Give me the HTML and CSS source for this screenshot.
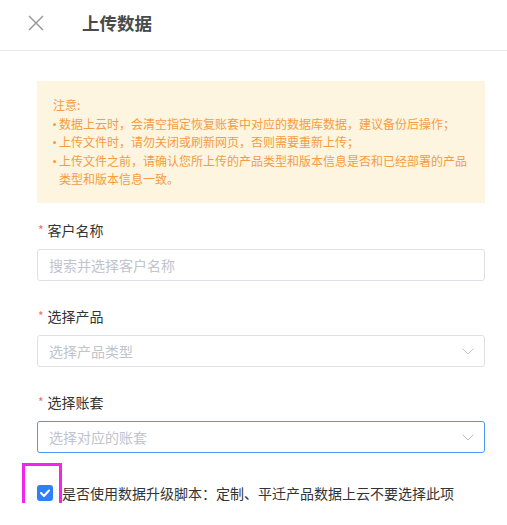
FILE: index.html
```html
<!DOCTYPE html>
<html lang="zh-CN">
<head>
<meta charset="utf-8">
<title>上传数据</title>
<link rel="stylesheet" href="styles.css">
</head>
<body>
<div class="drawer">
  <header class="header">
    <svg class="close" width="16" height="16" viewBox="0 0 16 16"><path d="M1 1L15 15M15 1L1 15" stroke="#9a9a9a" stroke-width="1.5" fill="none"/></svg>
    <h1 class="title">上传数据</h1>
  </header>
  <div class="body">
    <div class="notice">
      <div class="notice-line">注意:</div>
      <div class="notice-line bullet"><span class="dot"></span>数据上云时，会清空指定恢复账套中对应的数据库数据，建议备份后操作；</div>
      <div class="notice-line bullet"><span class="dot"></span>上传文件时，请勿关闭或刷新网页，否则需要重新上传；</div>
      <div class="notice-line bullet"><span class="dot"></span>上传文件之前，请确认您所上传的产品类型和版本信息是否和已经部署的产品类型和版本信息一致。</div>
    </div>

    <div class="form-item">
      <div class="label"><span class="req">*</span>客户名称</div>
      <div class="input"><span class="placeholder">搜索并选择客户名称</span></div>
    </div>
    <div class="form-item">
      <div class="label"><span class="req">*</span>选择产品</div>
      <div class="input"><span class="placeholder">选择产品类型</span>
        <svg class="chev" width="12" height="7" viewBox="0 0 12 7"><path d="M0.5 0.5L6 6L11.5 0.5" stroke="#c0c4cc" stroke-width="1" fill="none"/></svg>
      </div>
    </div>
    <div class="form-item">
      <div class="label"><span class="req">*</span>选择账套</div>
      <div class="input active"><span class="placeholder">选择对应的账套</span>
        <svg class="chev" width="12" height="7" viewBox="0 0 12 7"><path d="M0.5 0.5L6 6L11.5 0.5" stroke="#c0c4cc" stroke-width="1" fill="none"/></svg>
      </div>
    </div>

    <div class="check-row">
      <span class="check-wrap">
        <span class="checkbox"><svg width="10" height="8" viewBox="0 0 10 8"><path d="M1 4L4 7L9 1.5" stroke="#fff" stroke-width="2" fill="none" stroke-linecap="round" stroke-linejoin="round"/></svg></span>
        <span class="highlight"></span>
      </span>
      <span class="check-text">是否使用数据升级脚本：定制、平迁产品数据上云不要选择此项</span>
    </div>
  </div>
</div>
</body>
</html>
```
FILE: styles.css
```css
* { box-sizing: border-box; }
body {
  margin: 0;
  background: #fff;
  font-family: "Noto Sans CJK SC", "Noto Sans", sans-serif;
  color: #333;
}
.header {
  height: 51px;
  border-bottom: 1px solid #ececec;
  display: flex;
  align-items: center;
  padding: 0 0 5px 28px;
}
.close { display: block; }
.title {
  margin: 0 0 0 38px;
  font-size: 17.5px;
  font-weight: 700;
  color: #4a4a4a;
  line-height: 24px;
}
.body {
  padding: 30px 22px 0 37px;
}
.notice {
  background: #fdf5df;
  color: #f59c43;
  font-size: 12px;
  line-height: 18.5px;
  padding: 15px 16px 14px 16px;
  height: 122px;
}
.notice-line.bullet {
  padding-left: 6px;
  text-indent: -6px;
}
.dot {
  display: inline-block;
  width: 3px;
  height: 3px;
  background: #f59c43;
  border-radius: 50%;
  margin-right: 3px;
  vertical-align: middle;
  position: relative;
  top: -1px;
}
.form-item { margin-top: 17px; }
.form-item + .form-item { margin-top: 25px; }
.label {
  font-size: 14px;
  line-height: 20px;
  color: #333;
  display: flex;
  align-items: center;
}
.req {
  color: #f56c6c;
  font-size: 12px;
  margin: 0 4px 0 1px;
}
.input {
  margin-top: 9px;
  height: 32px;
  border: 1px solid #dcdfe6;
  border-radius: 3px;
  display: flex;
  align-items: center;
  justify-content: space-between;
  padding: 0 10px 0 11px;
  font-size: 14px;
}
.input.active { border-color: #4f96f6; }
.placeholder { color: #c0c4cc; }
.chev { display: block; }
.check-row {
  margin-top: 30px;
  display: flex;
  align-items: center;
  font-size: 14px;
  color: #333;
}
.check-wrap {
  position: relative;
  display: block;
  width: 16px;
  height: 16px;
  margin-right: 9px;
}
.checkbox {
  width: 16px;
  height: 16px;
  background: #2f7ff6;
  border-radius: 3px;
  display: flex;
  align-items: center;
  justify-content: center;
}
.highlight {
  position: absolute;
  left: -15px;
  top: -22px;
  width: 40px;
  height: 50px;
  border: 3px solid #f523f0;
}
.check-text { line-height: 20px; }
```
